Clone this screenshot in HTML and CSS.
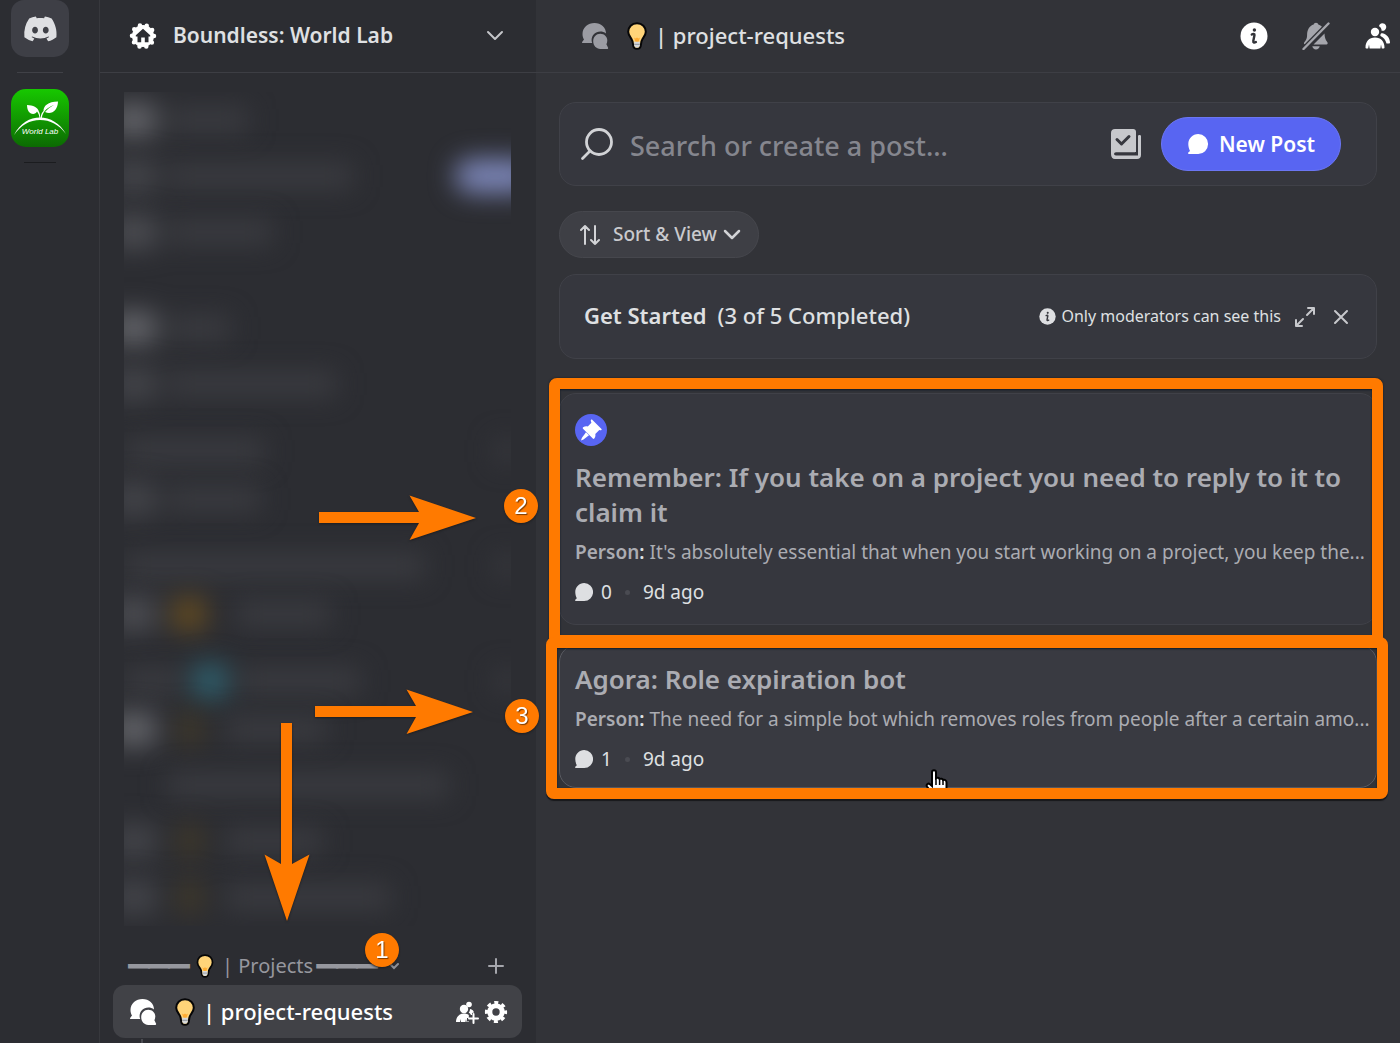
FILE: index.html
```html
<!DOCTYPE html>
<html lang="en">
<head>
    <meta charset="UTF-8">
    <meta name="viewport" content="width=device-width, initial-scale=1.0">
    <title>Boundless: World Lab</title>
    <link rel="stylesheet" href="styles.css">
</head>
<body>
    <!-- shared icons -->
    <svg class="defs" width="0" height="0">
        <symbol id="bulb" viewBox="0 0 20 28">
            <path d="M10 1.2C4.8 1.2 1.2 5 1.2 9.8c0 3.2 1.7 5 3.3 7.2 1 1.4 1.3 3 1.5 5.200C6.200 25.200 7.600 26.800 10 26.800s3.800-1.600 4-4.600c.2-2.200.5-3.800 1.500-5.200 1.600-2.200 3.300-4 3.300-7.200 0-4.800-3.600-8.600-8.800-8.600Z" fill="#ffd479" stroke="#060607" stroke-width="2"/>
            <path d="M7 15.500l1.500 4.500h3l1.500-4.500-1.500 1-1.500-1-1.500 1Z" fill="#ffac33"/>
            <path d="M7.200 19.800h5.600v3.200c0 1.500-1 2.600-2.800 2.600s-2.800-1.100-2.800-2.600Z" fill="#d5d9dd"/>
            <path d="M7.200 22.300h5.600" stroke="#8d9299" stroke-width="1"/>
        </symbol>
        <symbol id="forum" viewBox="0 0 28 28">
            <path d="M13.500 1C20 1 25 5.200 25 11.500c-1.800-1.400-3.600-2-5.700-2-5 0-8.700 3.900-8.700 8.600 0 1.200.2 2.100.6 3H1.800c-.8 0-1-.8-.5-1.400L3 17.600C1.900 15.800 1.500 14 1.500 12 1.500 5.500 7 1 13.500 1Z"/>
            <path d="M19.300 11.800c3.900 0 7 2.900 7 6.700 0 1.500-.4 2.600-.9 3.700l1.600 3.300c.4.800 0 1.500-.8 1.500h-6.900c-4.100 0-7.100-3.500-7.100-7.700s3-7.500 7.100-7.500Z"/>
        </symbol>
        <symbol id="bubble" viewBox="0 0 20 20">
            <path d="M10.200 0A9.800 9.800 0 1 1 10 20H.9c-.8 0-1.100-.9-.6-1.400l1.700-1.700C.9 15 .3 12.300.3 10 .3 4.500 4.700 0 10.200 0Z"/>
        </symbol>
        <symbol id="info" viewBox="0 0 28 28">
            <circle cx="14" cy="14" r="13.500"/>
            <circle class="hole-fill" cx="14.400" cy="8" r="1.700"/>
            <path class="hole-line" d="M11.800 12.500c1.300-.9 2.900-.8 2.700.6l-1.200 5.900c-.3 1.900 1.100 1.900 2.600 1" fill="none" stroke-width="2.400" stroke-linecap="round"/>
        </symbol>
    </svg>

    <div class="app">
        <nav class="rail">
            <a class="tile tile-home" href="#" aria-label="Direct messages">
                <svg width="40" height="40" viewBox="0 0 24 24" fill="#dedfe2"><path d="M19.730 4.870a18.200 18.200 0 0 0-4.600-1.440c-.21.4-.4.8-.58 1.210-1.690-.25-3.400-.25-5.100 0-.18-.41-.37-.82-.59-1.200-1.600.27-3.140.75-4.600 1.430A19.040 19.040 0 0 0 .96 17.700a18.430 18.430 0 0 0 5.630 2.870c.46-.62.86-1.280 1.200-1.980-.65-.25-1.290-.55-1.900-.92.17-.12.32-.24.470-.37 3.580 1.700 7.700 1.700 11.280 0l.46.37c-.6.36-1.250.67-1.900.92.35.7.75 1.350 1.200 1.980 2.030-.63 3.940-1.600 5.640-2.870.47-4.870-.78-9.090-3.300-12.830ZM8.300 15.120c-1.100 0-2-1.020-2-2.270 0-1.240.88-2.260 2-2.260s2.020 1.020 2 2.260c0 1.250-.89 2.270-2 2.270Zm7.400 0c-1.100 0-2-1.020-2-2.270 0-1.240.88-2.260 2-2.260s2.020 1.020 2 2.260c0 1.250-.88 2.270-2 2.270Z" transform="translate(1.800 1.500) scale(.87)"/></svg>
            </a>
            <hr class="rail-line">
            <a class="tile tile-lab" href="#" aria-label="World Lab">
                <svg width="58" height="58" viewBox="0 0 58 58" fill="#fff">
                    <path d="M3 46C9 34 19 28.500 29 28.500S49 34 55 45C48 35.500 39 31 29 31S10 36 3 46Z"/>
                    <path d="M28.500 29c-.2-2.500-1-4.500-2.500-6.500-1.700 4-9.800 4-10-6.500 6 .2 11 2.500 11.800 6.500 1 1.700 1.400 3.500 1.400 6.500Z"/>
                    <path d="M29.500 29c.4-3.500 1.400-5.500 3-7-.2-5 4.500-9.500 14.500-9.500-.2 9-6.500 13.500-13 10.500 2.500-3 5.500-5.200 9-7-5 1.700-11.200 5.500-12.200 13Z"/>
                    <text x="29" y="45" text-anchor="middle" class="lab-name">World Lab</text>
                </svg>
            </a>
            <hr class="rail-line rail-line-short">
        </nav>

        <aside class="sidebar">
            <header class="bar server-bar">
                <svg width="28" height="28" viewBox="0 0 28 28">
                    <circle cx="14" cy="14" r="11" fill="#fff"/>
                    <circle cx="14" cy="14" r="11" fill="none" stroke="#fff" stroke-width="4.500" stroke-linecap="round" stroke-dasharray="0 6.911"/>
                    <path d="M14 6.800 6.800 13.300v1.200h1.700v5.700h3.700v-4.700h3.600v4.700h3.700v-5.700h1.700v-1.200Z" fill="#2c2d32"/>
                </svg>
                <h1>Boundless: World Lab</h1>
                <svg class="push" width="18" height="12" viewBox="0 0 18 12" fill="none" stroke="#c4c5c9" stroke-width="2" stroke-linecap="round" stroke-linejoin="round"><path d="m2 2 7 7 7-7"/></svg>
            </header>

            <!-- hidden channels -->
            <div class="hidden-list" aria-hidden="true">
                <div class="row"><i class="dot bright"></i><b style="width: 80px"></b></div>
                <div class="row"><i class="dot"></i><b style="width: 184px"></b><i class="new"></i></div>
                <div class="row"><i class="dot mid"></i><b style="width: 104px"></b></div>
                <div class="row after-gap"><i class="dot bright"></i><b style="width: 62px"></b></div>
                <div class="row"><i class="dot"></i><b style="width: 168px"></b></div>
                <div class="group"><b style="width: 140px"></b><i class="plus"></i></div>
                <div class="row"><i class="dot"></i><b style="width: 92px"></b></div>
                <div class="group"><b style="width: 300px"></b><i class="plus"></i></div>
                <div class="row"><i class="dot mid"></i><i class="sun"></i><b style="width: 94px"></b></div>
                <div class="group"><b style="width: 56px"></b><i class="sea"></i><b style="width: 120px"></b><i class="plus"></i></div>
                <div class="row"><i class="dot bright"></i><i class="spark"></i><b style="width: 100px"></b></div>
                <div class="row"><i class="dot none"></i><b style="width: 280px"></b></div>
                <div class="row"><i class="dot"></i><i class="spark"></i><b style="width: 96px"></b></div>
                <div class="row"><i class="dot"></i><i class="spark"></i><b style="width: 164px"></b></div>
            </div>

            <div class="category">
                <span class="rule">━━━</span>
                <svg class="bulb-small" width="18" height="24"><use href="#bulb"/></svg>
                <span>| Projects</span>
                <span class="rule">━━━</span>
                <svg class="caret" width="10" height="8" viewBox="0 0 10 8" fill="none" stroke="#8e8f96" stroke-width="2" stroke-linecap="round"><path d="m1 2 4 4 4-4"/></svg>
                <button class="icon-btn push" aria-label="Create channel">
                    <svg width="16" height="16" viewBox="0 0 16 16" stroke="#a5a6ac" stroke-width="2" stroke-linecap="round"><path d="M8 1v14M1 8h14"/></svg>
                </button>
            </div>

            <a class="channel" href="#">
                <svg width="28" height="28" fill="#fff"><use href="#forum"/></svg>
                <svg class="bulb" width="20" height="28"><use href="#bulb"/></svg>
                <span>| project-requests</span>
                <svg class="push" width="24" height="24" viewBox="0 0 24 24" fill="#fff">
                    <circle cx="14" cy="4.500" r="2.800"/><circle cx="9" cy="9" r="4.200"/>
                    <path d="M1 22c0-5 3-8.500 8-8.500 2 0 3.500.5 4.800 1.500v3H12v3.500h2V22h-2.500l-.5-3-.5 3H6l-.5-3-.5 3Z"/>
                    <path d="M15 9c2.500.6 3.500 1.800 4 3.500l-2 .5v2h-1c-.6-1.300-1.300-1.700-2.300-2.200.8-1.200 1.300-2.300 1.300-3.800Z"/>
                    <path d="M18.500 14v9M14 18.500h9" stroke="#fff" stroke-width="2" stroke-linecap="round"/>
                </svg>
                <svg class="gear" width="24" height="24" viewBox="0 0 24 24" fill="none" stroke="#fff">
                    <circle cx="12" cy="12" r="6.200" stroke-width="5"/>
                    <circle cx="12" cy="12" r="9.500" stroke-width="3.200" stroke-dasharray="4 3.461" stroke-dashoffset="2"/>
                </svg>
            </a>
            <i class="thread-line"></i>

            <!-- callouts -->
            <svg class="arrow arrow-two" width="158" height="46" viewBox="0 0 158 46"><path d="M0 17h100L90.500.5 157 23 90.500 45 100 28H0Z"/></svg>
            <svg class="arrow arrow-three" width="158" height="46" viewBox="0 0 158 46"><path d="M0 17h101L91.500.5 158 23 91.500 45 101 28H0Z"/></svg>
            <svg class="arrow arrow-one" width="46" height="199" viewBox="0 0 46 199"><path d="M17 0v141L.5 131.500 23 198l22.500-66.500L28 141V0Z"/></svg>
            <span class="step step-one">1</span>
            <span class="step step-two">2</span>
            <span class="step step-three">3</span>
        </aside>

        <main class="main">
            <header class="bar channel-bar">
                <svg width="28" height="28" fill="#9b9ca3"><use href="#forum"/></svg>
                <svg class="bulb" width="20" height="28"><use href="#bulb"/></svg>
                <h2>| project-requests</h2>
                <div class="tools push">
                    <button class="icon-btn" aria-label="Guidelines">
                        <svg class="on-main" width="28" height="28" fill="#fff"><use href="#info"/></svg>
                    </button>
                    <button class="icon-btn" aria-label="Notifications">
                        <svg width="28" height="28" viewBox="0 0 28 28" fill="#a5a6ac">
                            <path d="M14 .8c1.300 0 2 .8 2.300 1.600 2.300.7 4.300 2.200 5.300 4.400L6 22.400H3.200c-1.200 0-1.600-1.200-.9-2.100l1.500-2.100c1-1.500 1.300-3.200 1.300-5.600 0-4.900 2.300-8.900 6.600-10.200.3-.8 1-1.600 2.300-1.600Z"/>
                            <path d="M22.500 11.500c.1 3 .6 5 1.500 6.700l1.400 2.100c.6.900.2 2.100-.9 2.100h-13Z"/>
                            <path d="M10.300 24.200h7.400c-.3 2-1.800 3.200-3.700 3.200s-3.400-1.200-3.700-3.200Z"/>
                            <path d="M1.500 27 26.500 1.500" stroke="#323338" stroke-width="5"/>
                            <path d="M1.500 27 26.500 1.500" stroke="#a5a6ac" stroke-width="2.400" stroke-linecap="round"/>
                        </svg>
                    </button>
                    <button class="icon-btn" aria-label="Members">
                        <svg width="28" height="28" viewBox="0 0 28 28" fill="#fff">
                            <path d="M17 1.500a3.800 3.800 0 1 1 .6 7.200c0-2-.8-3.500-2.600-4.500.3-1.200 1-2.200 2-2.700Z"/>
                            <circle cx="11" cy="10" r="4.200"/>
                            <path d="M1.500 25.500C1.500 19.500 5 15.500 11 15.500s9.500 4 9.500 10c0 .6-.5 1-1 1h-1.700l-.8-4-.6 4H5.600l-.6-4-.8 4H2.500c-.5 0-1-.4-1-1Z"/>
                            <path d="M16.500 12.500c.3-1 .8-1.500 2-1.300 4.500 1 7.200 4.800 7.500 9 .1.900-.4 1.300-1.200 1.300h-2.300c-1-3.500-2.700-5.800-5.600-7.200-.6-.4-.7-1-.4-1.800Z"/>
                        </svg>
                    </button>
                </div>
            </header>

            <div class="content">
                <form class="panel search">
                    <svg width="34" height="34" viewBox="0 0 34 34" fill="none" stroke="#d2d3d6" stroke-width="2.800" stroke-linecap="round"><circle cx="19" cy="15" r="12.500"/><path d="M10 24 2.500 31.500"/></svg>
                    <input type="text" placeholder="Search or create a post..." aria-label="Search or create a post">
                    <button type="button" class="icon-btn" aria-label="Post guidelines">
                        <svg width="32" height="32" viewBox="0 0 32 32">
                            <path d="M5 1h18c2 0 3 1 3 3v20H7" fill="#c7c8cc"/>
                            <path d="M5 1C2.500 1 1 2.500 1 5v21c0 3 1.500 5 4 5h22c2.500 0 4-1.500 4-4V8c0-1.500-3-1.500-3 0v19.500H6c-2.500 0-2.500-3.200 0-3.200h19V3.500L23 1Z" fill="#c7c8cc"/>
                            <path d="M7 11.500 11.500 16 19 8.500" fill="none" stroke="#36373e" stroke-width="3" stroke-linecap="round" stroke-linejoin="round"/>
                        </svg>
                    </button>
                    <button type="button" class="new-post">
                        <svg width="22" height="20" fill="#fff"><use href="#bubble"/></svg>
                        New Post
                    </button>
                </form>

                <button class="sort">
                    <svg width="20" height="22" viewBox="0 0 20 22" fill="none" stroke="#d2d3d6" stroke-width="2" stroke-linecap="round" stroke-linejoin="round"><path d="M5 20V2M1 6l4-4 4 4M15 2v18M11 16l4 4 4-4"/></svg>
                    <span>Sort &amp; View</span>
                    <svg class="sort-caret" width="18" height="12" viewBox="0 0 18 12" fill="none" stroke="#d2d3d6" stroke-width="2.500" stroke-linecap="round" stroke-linejoin="round"><path d="m2 2 7 7 7-7"/></svg>
                </button>

                <section class="panel started">
                    <h3>Get Started</h3>
                    <span class="progress">(3 of 5 Completed)</span>
                    <svg class="on-panel push" width="17" height="17" fill="#dedfe2"><use href="#info"/></svg>
                    <span class="note">Only moderators can see this</span>
                    <button class="icon-btn expand" aria-label="Expand">
                        <svg width="22" height="22" viewBox="0 0 22 22" fill="none" stroke="#c7c8cc" stroke-width="2" stroke-linecap="round" stroke-linejoin="round"><path d="M14 2h6v6M20 2l-7 7M8 20H2v-6M2 20l7-7"/></svg>
                    </button>
                    <button class="icon-btn" aria-label="Dismiss">
                        <svg width="16" height="16" viewBox="0 0 16 16" stroke="#c7c8cc" stroke-width="2" stroke-linecap="round"><path d="m2 2 12 12M14 2 2 14"/></svg>
                    </button>
                </section>

                <article class="panel post pinned">
                    <span class="pin">
                        <svg width="22" height="22" viewBox="0 0 22 22" fill="#fff"><path d="M12 .5 21.500 10c.6.800-.3 1.600-1.200 1.300l-1-.4-4 4c.4 1.700 0 3.400-1 4.600-.4.500-1 .5-1.500 0L3 9.800c-.5-.5-.4-1 .1-1.500 1.400-1 3-1.300 4.700-.9l3.600-3.700-.5-1.400C10.500 1 11.200.2 12 .5Z"/><path d="m6 13.200 3 3L3.500 20.500 1 21.500l.8-2.600Z"/></svg>
                    </span>
                    <h3>Remember: If you take on a project you need to reply to it to claim it</h3>
                    <p><b>Person<span>:</span></b> It's absolutely essential that when you start working on a project, you keep the...</p>
                    <div class="meta">
                        <svg width="18" height="18" fill="#dedfe2"><use href="#bubble"/></svg>
                        <span>0</span><i></i><time>9d ago</time>
                    </div>
                    <span class="frame"></span>
                </article>

                <article class="panel post hovered">
                    <h3>Agora: Role expiration bot</h3>
                    <p><b>Person<span>:</span></b> The need for a simple bot which removes roles from people after a certain amo...</p>
                    <div class="meta">
                        <svg width="18" height="18" fill="#dedfe2"><use href="#bubble"/></svg>
                        <span>1</span><i></i><time>9d ago</time>
                    </div>
                    <svg class="pointer" width="26" height="32" viewBox="0 0 26 32"><path d="M8 14V3.500C8 .5 12 .5 12 3.500v5.700c1-.8 3-.6 3.600.8 1.200-.7 3-.3 3.500 1 1.700-.5 3.400.4 3.400 2.500V20c0 3-1.500 4.500-2 7v2.500H10V27c-1.500-2.500-4.500-5.500-7-9.500-1.200-2.300 1.400-3.700 3-2.200L8 17Z" fill="#fff" stroke="#000" stroke-width="2"/><path d="M12 9v7M15.600 10v6M19 11v5" stroke="#000" stroke-width="1.500"/></svg>
                    <span class="frame"></span>
                </article>
            </div>
        </main>
    </div>
</body>
</html>
```
FILE: styles.css
```css
* {
    box-sizing: border-box;
}
body {
    margin: 0;
    background: #323338;
    color: #dfe0e2;
    font-family: "Noto Sans", "Open Sans", sans-serif;
    font-size: 19px;
    overflow: hidden;
}
h1, h2, h3, p {
    margin: 0;
}
svg {
    display: block;
    flex: none;
}
button {
    font: inherit;
    color: inherit;
    border: 0;
    padding: 0;
    background: none;
    cursor: pointer;
}
a {
    color: inherit;
    text-decoration: none;
}
.defs {
    position: absolute;
}
.push {
    margin-left: auto;
}
.icon-btn {
    flex: none;
}
.app {
    display: grid;
    grid-template-columns: 99px 437px 1fr;
    min-height: 100vh;
}

/* servers */
.rail {
    background: #2c2d32;
    padding-left: 11px;
}
.tile {
    display: flex;
    align-items: center;
    justify-content: center;
    width: 58px;
    height: 58px;
    border-radius: 15px;
    overflow: hidden;
}
.tile-home {
    height: 57px;
    background: #3e3f46;
    border-radius: 13px 13px 15px 15px;
}
.tile-lab {
    background: linear-gradient(#17c800, #0c6a03);
}
.lab-name {
    font: italic 8px "Liberation Sans", sans-serif;
}
.rail-line {
    width: 46px;
    height: 1px;
    margin: 15px 0 16px 6px;
    border: 0;
    background: #404147;
}
.rail-line-short {
    width: 32px;
    margin-left: 13px;
    background: #1b1c1f;
}

/* channel list */
.sidebar {
    position: relative;
    z-index: 1;
    background: #2c2d32;
    border-left: 1px solid #37383d;
}
.bar {
    display: flex;
    align-items: center;
    height: 73px;
    border-bottom: 1px solid #3d3e44;
}
.bar h1, .bar h2 {
    padding-bottom: 3px;
    line-height: 30px;
}
.server-bar {
    padding: 0 32px 0 29px;
}
.bar h1 {
    margin-left: 16px;
    font-size: 21px;
    font-weight: 600;
}
.hidden-list {
    margin: 19px 25px 0 24px;
    height: 834px;
    overflow: hidden;
}
.row, .group {
    display: flex;
    align-items: center;
    height: 56px;
    filter: blur(13px);
}
.group {
    height: 40px;
    margin-top: 19px;
}
.after-gap {
    margin-top: 40px;
}
.hidden-list i, .hidden-list b {
    flex: none;
    height: 24px;
    background: #3b3c41;
}
.hidden-list .dot {
    width: 44px;
    height: 34px;
    margin: 0 12px 0 -12px;
    background: #434449;
}
.hidden-list .mid {
    background: #4b4c51;
}
.hidden-list .bright {
    background: #616267;
}
.hidden-list .none {
    background: none;
}
.hidden-list .new {
    width: 80px;
    height: 34px;
    margin: 0 -24px 0 auto;
    border-radius: 17px;
    background: #7c86b8;
}
.hidden-list .plus {
    width: 24px;
    margin: 0 -8px 0 auto;
    background: #37383d;
}
.hidden-list .sun {
    width: 34px;
    height: 34px;
    margin: 0 30px 0 4px;
    background: #614a22;
}
.hidden-list .sea {
    width: 36px;
    height: 36px;
    margin: 0 12px;
    background: #2f5c69;
}
.hidden-list .spark {
    width: 24px;
    height: 34px;
    margin: 0 24px 0 10px;
    background: #403929;
}
.category {
    display: flex;
    align-items: center;
    height: 40px;
    margin-top: 20px;
    padding: 0 32px 0 29px;
    color: #96979e;
    font-size: 20px;
    line-height: 26px;
}
.rule {
    font-family: "Noto Sans CJK SC", sans-serif;
    -webkit-text-stroke: 2px #96979e;
}
.bulb-small {
    margin: 0 8px 0 7px;
}
.category span + .rule {
    margin-left: 4px;
}
.caret {
    margin-left: 12px;
}
.channel {
    display: flex;
    align-items: center;
    height: 53px;
    margin: -1px 14px 0 13px;
    padding: 0 14px 0 16px;
    border-radius: 12px;
    background: #414247;
    color: #fff;
    font-size: 22px;
    font-weight: 500;
}
.channel span {
    padding-bottom: 2px;
}
.bulb {
    margin: 0 8px 0 18px;
}
.gear {
    margin-left: 5px;
}
.thread-line {
    display: block;
    width: 2px;
    height: 4px;
    margin: 1px 0 0 41px;
    background: #4a4b51;
}

/* callouts */
.arrow, .step {
    position: absolute;
    fill: #ff7a00;
    filter: drop-shadow(0 1px 1px #1c1d20);
}
.arrow-two {
    left: 219px;
    top: 495px;
}
.arrow-three {
    left: 215px;
    top: 689px;
}
.arrow-one {
    left: 164px;
    top: 723px;
}
.step {
    width: 34px;
    height: 34px;
    border-radius: 50%;
    background: #ff7a00;
    color: #fff;
    font: 24px/34px "Liberation Sans", sans-serif;
    text-align: center;
    text-shadow: 1px 1px 1px #7a3a00;
}
.step-one {
    left: 265px;
    top: 933px;
}
.step-two {
    left: 404px;
    top: 489px;
}
.step-three {
    left: 405px;
    top: 699px;
}

/* forum */
.main {
    min-width: 0;
}
.channel-bar {
    padding: 0 8px 0 45px;
}
.bar h2 {
    font-size: 22px;
    font-weight: 500;
}
.tools {
    display: flex;
    gap: 34px;
}
.on-main {
    --hole: #323338;
}
.on-panel {
    --hole: #36373e;
}
.hole-fill {
    fill: var(--hole);
}
.hole-line {
    stroke: var(--hole);
}
.content {
    padding: 29px 23px;
}
.panel {
    border: 1px solid #404148;
    border-radius: 17px;
    background: #36373e;
}
.search {
    display: flex;
    align-items: center;
    height: 84px;
    padding: 0 35px 0 20px;
}
.search input {
    flex: 1;
    min-width: 0;
    margin: 4px 16px 0;
    padding: 0;
    border: 0;
    outline: 0;
    background: none;
    color: #dfe0e2;
    font: 500 27px/36px "Noto Sans", sans-serif;
}
.search input::placeholder {
    color: #85868e;
    opacity: 1;
}
.new-post {
    display: flex;
    align-items: center;
    justify-content: center;
    gap: 10px;
    width: 180px;
    height: 54px;
    margin-left: 19px;
    border: 1px solid #6b76f3;
    border-radius: 27px;
    background: #5865f2;
    color: #fff;
    font-size: 21px;
    font-weight: 600;
}
.sort {
    display: flex;
    align-items: center;
    height: 47px;
    margin-top: 25px;
    padding: 0 17px 0 20px;
    border: 1px solid #46474d;
    border-radius: 24px;
    background: #3e3f45;
    color: #c9cace;
    font-weight: 500;
}
.sort span {
    margin: 0 6px 0 13px;
    padding-bottom: 2px;
}
.started {
    display: flex;
    align-items: center;
    height: 85px;
    margin-top: 16px;
    padding: 0 27px 0 24px;
    font-size: 22px;
}
.started h3 {
    padding-bottom: 3px;
    font-size: 22px;
    font-weight: 600;
}
.progress {
    margin-left: 11px;
    padding-bottom: 3px;
    font-weight: 500;
}
.note {
    margin: 0 13px 0 5px;
    padding-bottom: 2px;
    font-size: 16px;
}
.expand {
    margin-right: 17px;
}
.post {
    position: relative;
    margin-top: 20px;
    padding: 16px 15px;
    color: #abacb2;
}
.pinned {
    margin-top: 34px;
    padding: 20px 15px;
}
.hovered {
    border-color: #5a5b62;
    background: #393a41;
}
.pin {
    display: flex;
    align-items: center;
    justify-content: center;
    width: 32px;
    height: 32px;
    margin-bottom: 14px;
    border-radius: 50%;
    background: #5865f2;
}
.post h3 {
    font-size: 26px;
    font-weight: 600;
    line-height: 35px;
}
.post p {
    margin-top: 10px;
    line-height: 24px;
    white-space: nowrap;
}
.post p b {
    font-weight: 600;
}
.post p b span {
    color: #dfe0e2;
}
.meta {
    display: flex;
    align-items: center;
    margin-top: 16px;
    color: #dfe0e2;
    font-size: 19px;
    line-height: 24px;
}
.meta span {
    margin-left: 8px;
}
.meta i {
    width: 5px;
    height: 5px;
    margin: 0 13px;
    border-radius: 50%;
    background: #4a4b52;
}
.frame {
    position: absolute;
    inset: -16px -7px -22px -11px;
    border: 11px solid #ff7a00;
    border-radius: 8px;
    box-shadow: 0 0 2px #17181b, inset 0 1px 2px #0f1a26;
}
.hovered .frame {
    inset: -9px -12px -12px -14px;
    box-shadow: 0 2px 1px #17181b, inset 0 1px 2px #0f1a26;
}
.pointer {
    position: absolute;
    left: 364px;
    top: 123px;
}
```
